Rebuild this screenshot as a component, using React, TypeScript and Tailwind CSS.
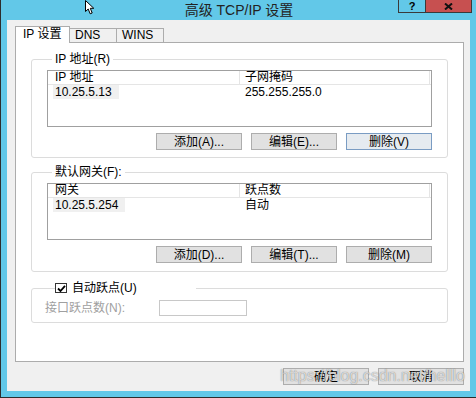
import React from 'react'

const FONT = "font-['Liberation_Sans','Noto_Sans_CJK_SC',sans-serif]"

const Btn = ({ label, focused = false }: { label: string; focused?: boolean }) => (
  <button
    className={
      focused
        ? 'h-[17px] w-[86px] border border-[#7a9cc3] bg-[#e6ebf0] text-xs leading-none text-black'
        : 'h-[17px] w-[86px] border border-[#adadad] bg-[#e1e1e1] text-xs leading-none text-black'
    }
  >
    {label}
  </button>
)

const ListBox = ({ cols, row }: { cols: [string, string]; row: [string, string] }) => (
  <div className="h-[57px] border border-[#a0a0a0] bg-white">
    <div className="flex h-[14px] border-b border-[#e5e5e5] text-xs leading-[13px]">
      <div className="w-[192px] border-r border-[#e5e5e5] pl-[7px]">{cols[0]}</div>
      <div className="w-[190px] border-r border-[#e5e5e5] pl-[5px]">{cols[1]}</div>
    </div>
    <div className="flex h-[14px] text-xs leading-[14px]">
      <div className="w-[192px] pl-[5px]">
        <span className="inline-block bg-[#f0f0f0] pl-[2px] pr-[7px]">{row[0]}</span>
      </div>
      <div className="pl-[5px]">{row[1]}</div>
    </div>
  </div>
)

export default function App() {
  return (
    <div
      className={`relative flex h-[398px] w-[476px] flex-col border-b border-l border-[#2d2d2d] bg-[#62c8e8] text-black ${FONT}`}
    >
      {/* title bar */}
      <div className="flex h-[20px] shrink-0">
        <div className="flex-1 pl-[79px] text-center text-[14px] leading-[20px] text-[#222]">
          高级 TCP/IP 设置
        </div>
        <div className="mr-[4px] flex h-[13px] border-x border-b border-[#3a3a3a]">
          <div className="flex w-[27px] items-center justify-center border-r border-[#3a3a3a] text-[11px] font-bold leading-none">
            ?
          </div>
          <div className="flex w-[45px] items-center justify-center bg-[#c75050]">
            <svg width="9" height="7" viewBox="0 0 9 7">
              <path d="M1 0.5 L8 6.5 M8 0.5 L1 6.5" stroke="#111" strokeWidth="2" />
            </svg>
          </div>
        </div>
      </div>

      <div className="flex flex-1 px-[6px] pb-[6px]">
        <div className="flex flex-1 flex-col bg-[#f0f0f0] pl-[8px] pr-[6px] pt-[6px]">
          {/* tabs */}
          <div className="flex h-[16px] items-end">
            <div className="relative z-10 -mb-px h-[17px] w-[55px] border border-b-0 border-[#acacac] bg-white pl-[7px] text-xs leading-[15px]">
              IP 设置
            </div>
            <div className="-ml-px h-[14px] w-[48px] border border-b-0 border-[#acacac] bg-[#f0f0f0] pl-[5px] text-xs leading-[13px]">
              DNS
            </div>
            <div className="-ml-px h-[14px] w-[48px] border border-b-0 border-[#acacac] bg-[#f0f0f0] pl-[5px] text-xs leading-[13px]">
              WINS
            </div>
          </div>

          {/* panel */}
          <div className="h-[320px] border border-[#acacac] bg-white px-[15px] pt-[8px]">
            <fieldset className="rounded-[3px] border border-[#dcdcdc] px-[15px] pb-[7px]">
              <legend className="ml-[5px] px-[3px] text-xs leading-[16px]">IP 地址(R)</legend>
              <div className="mt-[3px]">
                <ListBox cols={['IP 地址', '子网掩码']} row={['10.25.5.13', '255.255.255.0']} />
              </div>
              <div className="mt-[6px] flex justify-end gap-[9px]">
                <Btn label="添加(A)..." />
                <Btn label="编辑(E)..." />
                <Btn label="删除(V)" focused />
              </div>
            </fieldset>

            <fieldset className="mt-[6px] rounded-[3px] border border-[#dcdcdc] px-[15px] pb-[8px]">
              <legend className="ml-[5px] px-[3px] text-xs leading-[16px]">默认网关(F):</legend>
              <div className="mt-[3px]">
                <ListBox cols={['网关', '跃点数']} row={['10.25.5.254', '自动']} />
              </div>
              <div className="mt-[6px] flex justify-end gap-[9px]">
                <Btn label="添加(D)..." />
                <Btn label="编辑(T)..." />
                <Btn label="删除(M)" />
              </div>
            </fieldset>

            <fieldset className="mt-[8px] rounded-[3px] border border-[#dcdcdc] pb-[6px] pl-[13px]">
              <legend className="ml-[10px] flex h-[16px] w-[141px] items-center text-xs">
                <span className="flex h-[10px] w-[12px] items-center justify-center border border-[#333] bg-white">
                  <svg width="9" height="7" viewBox="0 0 9 7">
                    <path d="M1 3.5 L3.5 6 L8 0.8" fill="none" stroke="#000" strokeWidth="1.8" />
                  </svg>
                </span>
                <span className="ml-[5px] leading-[16px]">自动跃点(U)</span>
              </legend>
              <div className="mt-[4px] flex items-center">
                <span className="w-[114px] text-xs leading-[16px] text-[#a0a0a0]">接口跃点数(N):</span>
                <div className="h-[16px] w-[88px] border border-[#c8c8c8] bg-white" />
              </div>
            </fieldset>
          </div>

          {/* dialog buttons */}
          <div className="mt-[6px] flex justify-end gap-[9px]">
            <Btn label="确定" />
            <Btn label="取消" />
          </div>
        </div>
      </div>

      {/* mouse cursor */}
      <svg className="absolute left-[84px] top-0" width="11" height="15" viewBox="0 0 11 15">
        <path d="M0.5 0.5 L0.5 11.5 L3.2 9 L5.2 13.8 L7.2 13 L5.3 8.3 L8.8 8.3 Z" fill="#fff" stroke="#000" strokeWidth="1" />
      </svg>

      {/* watermark */}
      <div className="pointer-events-none absolute left-[279px] top-[366px] text-[16px] leading-[20px] text-[rgba(255,255,255,0.7)] [text-shadow:0_0_1px_rgba(0,0,0,0.55)]">
        https://blog.csdn.net/helllo
      </div>
    </div>
  )
}
